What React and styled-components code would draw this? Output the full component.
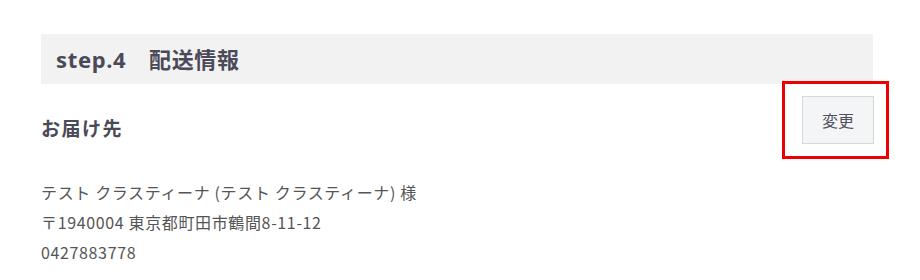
import React from 'react'
import styled, { createGlobalStyle } from 'styled-components'

const GlobalStyle = createGlobalStyle`
  body {
    margin: 0;
    background: #fff;
    font-family: 'Noto Sans', 'Noto Sans CJK JP', sans-serif;
  }
`

function App() {
  return (
    <>
      <GlobalStyle />
      <MainWrap>
        <StepHeader>step.4　配送情報</StepHeader>
        <DestRow>
          <DestTitle>お届け先</DestTitle>
          <ButtonWrap>
            <ChangeButton type="button">変更</ChangeButton>
            <Highlight />
          </ButtonWrap>
        </DestRow>
        <Address>
          <AddressLine>テスト クラスティーナ (テスト クラスティーナ) 様</AddressLine>
          <AddressLine>〒1940004 東京都町田市鶴間8-11-12</AddressLine>
          <AddressLine>0427883778</AddressLine>
        </Address>
      </MainWrap>
    </>
  )
}

const MainWrap = styled.div`
  width: 832px;
  padding: 34px 0 0 41px;
`

const StepHeader = styled.h2`
  margin: 0;
  height: 50px;
  display: flex;
  align-items: center;
  padding: 0 0 2px 15px;
  box-sizing: border-box;
  background: #f2f2f2;
  color: #4a4a58;
  font-size: 22px;
  font-weight: 700;
  letter-spacing: 0.03em;
`

const DestRow = styled.div`
  display: flex;
  justify-content: space-between;
  align-items: flex-start;
  margin-top: 12px;
`

const DestTitle = styled.h3`
  margin: 20px 0 0;
  color: #4a4a58;
  font-size: 19px;
  font-weight: 700;
  line-height: 27px;
  letter-spacing: 0.08em;
`

const ButtonWrap = styled.div`
  position: relative;
`

const ChangeButton = styled.button`
  display: block;
  width: 72px;
  height: 48px;
  margin-right: -1px;
  background: #f4f5f7;
  border: 1px solid #d8d8d8;
  color: #50505c;
  font-family: inherit;
  font-size: 16px;
  cursor: pointer;
`

const Highlight = styled.div`
  position: absolute;
  top: -15px;
  bottom: -15px;
  left: -20px;
  right: -16px;
  border: 3px solid #ee0000;
  pointer-events: none;
`

const Address = styled.div`
  margin-top: 33px;
  color: #555;
  font-family: 'Noto Sans CJK JP', sans-serif;
  font-size: 16px;
  line-height: 30px;
  letter-spacing: 0.04em;
`

const AddressLine = styled.p`
  margin: 0;
`

export default App
